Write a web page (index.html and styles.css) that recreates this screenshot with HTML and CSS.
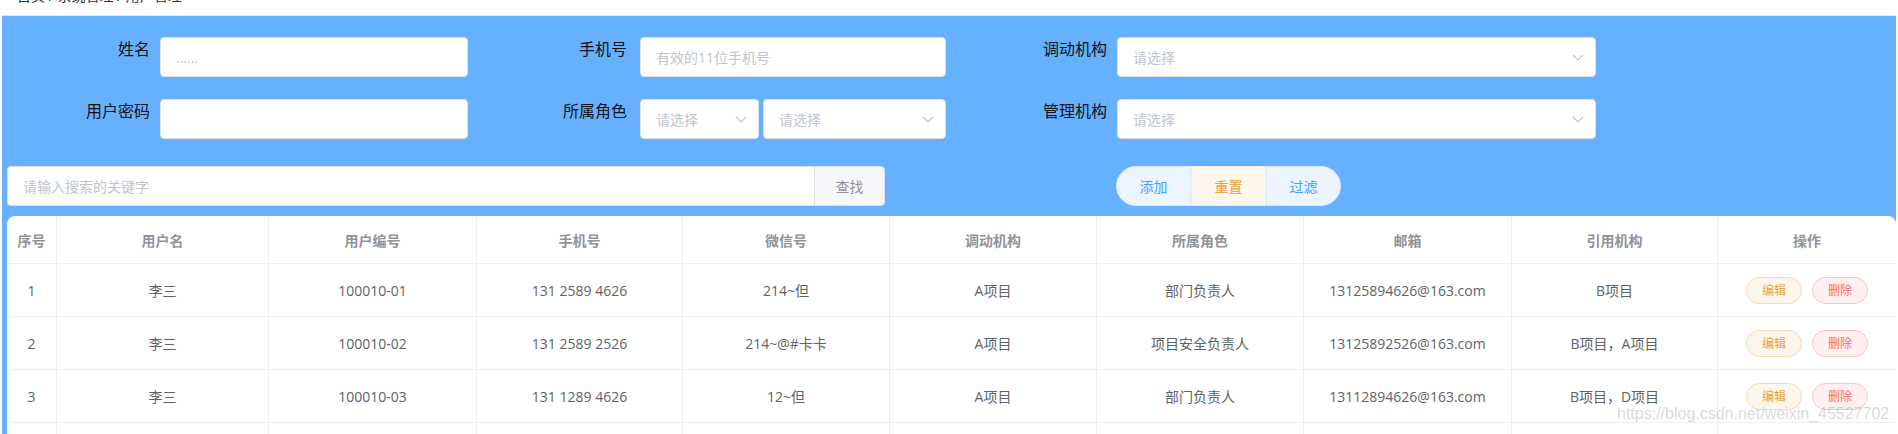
FILE: index.html
```html
<!DOCTYPE html>
<html lang="zh-CN">
<head>
  <meta charset="UTF-8" />
  <title>用户管理</title>
  <link rel="stylesheet" href="styles.css">
</head>
<body>
  <div class="crumb">
    <span>首页 / 系统管理 / 用户管理</span>
  </div>

  <div class="panel">
    <form class="filter">
      <div class="row">
        <div class="field">
          <label class="label l1">姓名</label>
          <input class="input w1" type="text" placeholder="......">
        </div>
        <div class="field">
          <label class="label l2">手机号</label>
          <input class="input w2" type="text" placeholder="有效的11位手机号">
        </div>
        <div class="field">
          <label class="label l3">调动机构</label>
          <div class="select w3">
            <span>请选择</span>
            <svg class="arrow" width="12" height="7" viewBox="0 0 12 7"><polyline points="1,1 6,6 11,1" /></svg>
          </div>
        </div>
      </div>

      <div class="row">
        <div class="field">
          <label class="label l1">用户密码</label>
          <input class="input w1" type="password">
        </div>
        <div class="field">
          <label class="label l2">所属角色</label>
          <div class="pair">
            <div class="select small">
              <span>请选择</span>
              <svg class="arrow" width="12" height="7" viewBox="0 0 12 7"><polyline points="1,1 6,6 11,1" /></svg>
            </div>
            <div class="select wide">
              <span>请选择</span>
              <svg class="arrow" width="12" height="7" viewBox="0 0 12 7"><polyline points="1,1 6,6 11,1" /></svg>
            </div>
          </div>
        </div>
        <div class="field">
          <label class="label l3">管理机构</label>
          <div class="select w3">
            <span>请选择</span>
            <svg class="arrow" width="12" height="7" viewBox="0 0 12 7"><polyline points="1,1 6,6 11,1" /></svg>
          </div>
        </div>
      </div>
    </form>

    <div class="tools">
      <div class="search">
        <input type="text" placeholder="请输入搜索的关键字">
        <button type="button">查找</button>
      </div>
      <div class="btn-group">
        <button type="button" class="blue">添加</button>
        <button type="button" class="orange">重置</button>
        <button type="button" class="blue">过滤</button>
      </div>
    </div>

    <div class="table-wrap">
      <table class="grid">
        <colgroup>
          <col style="width:50px"><col style="width:212px"><col style="width:208px">
          <col style="width:206px"><col style="width:207px"><col style="width:207px">
          <col style="width:207px"><col style="width:208px"><col style="width:206px">
          <col style="width:178px">
        </colgroup>
        <thead>
          <tr>
            <th>序号</th><th>用户名</th><th>用户编号</th><th>手机号</th><th>微信号</th>
            <th>调动机构</th><th>所属角色</th><th>邮箱</th><th>引用机构</th><th>操作</th>
          </tr>
        </thead>
        <tbody>
          <tr>
            <td>1</td><td>李三</td><td>100010-01</td><td>131 2589 4626</td><td>214~但</td>
            <td>A项目</td><td>部门负责人</td><td>13125894626@163.com</td><td>B项目</td>
            <td><button class="mini edit">编辑</button><button class="mini del">删除</button></td>
          </tr>
          <tr>
            <td>2</td><td>李三</td><td>100010-02</td><td>131 2589 2526</td><td>214~@#卡卡</td>
            <td>A项目</td><td>项目安全负责人</td><td>13125892526@163.com</td><td>B项目，A项目</td>
            <td><button class="mini edit">编辑</button><button class="mini del">删除</button></td>
          </tr>
          <tr>
            <td>3</td><td>李三</td><td>100010-03</td><td>131 1289 4626</td><td>12~但</td>
            <td>A项目</td><td>部门负责人</td><td>13112894626@163.com</td><td>B项目，D项目</td>
            <td><button class="mini edit">编辑</button><button class="mini del">删除</button></td>
          </tr>
          <tr class="next">
            <td></td><td></td><td></td><td></td><td></td>
            <td></td><td></td><td></td><td></td><td></td>
          </tr>
        </tbody>
      </table>
    </div>
  </div>

  <div class="watermark">https://blog.csdn.net/weixin_45527702</div>
</body>
</html>
```

FILE: styles.css
```css
body {
  margin: 0;
  padding: 0 2px;
  position: relative;
  background: #fff;
  font-family: 'Open Sans', 'Noto Sans CJK SC', sans-serif;
  font-size: 14px;
  color: #606266;
  overflow: hidden;
}

.crumb {
  height: 15px;
  border-bottom: 1px solid #e4e7ed;
  overflow: hidden;
}

.crumb span {
  display: block;
  margin-top: -14px;
  padding-left: 15px;
  line-height: 20px;
  color: #303133;
}

.panel {
  background: #66b1ff;
  padding-top: 21px;
}

/* filter form */
.row {
  display: flex;
  height: 40px;
  margin-bottom: 22px;
}

.row + .row {
  margin-bottom: 27px;
}

.field {
  display: flex;
}

.label {
  box-sizing: border-box;
  text-align: right;
  font-size: 16px;
  line-height: 24px;
  color: #111;
}

.l1 { width: 158px; padding-right: 10px; }
.l2 { width: 172px; padding-right: 13px; }
.l3 { width: 171px; padding-right: 10px; }

.input,
.select {
  box-sizing: border-box;
  height: 40px;
  border: 1px solid #dcdfe6;
  border-radius: 4px;
  background: #fff;
  padding: 0 15px;
  font-family: inherit;
  font-size: 14px;
  color: #606266;
  outline: none;
}

.input::placeholder {
  color: #c0c4cc;
}

.w1 { width: 308px; }
.w2 { width: 306px; }
.w3 { width: 479px; }

.select {
  display: flex;
  align-items: center;
  justify-content: space-between;
  padding-right: 11px;
  color: #c0c4cc;
}

.pair {
  display: flex;
  gap: 4px;
}

.select.small { width: 119px; }
.select.wide { width: 183px; }

.arrow polyline {
  fill: none;
  stroke: #c0c4cc;
  stroke-width: 1.2;
}

/* search + actions */
.tools {
  display: flex;
  padding-left: 5px;
  height: 40px;
}

.search {
  display: flex;
  width: 878px;
}

.search input {
  flex: 1;
  box-sizing: border-box;
  height: 40px;
  border: 1px solid #dcdfe6;
  border-right: none;
  border-radius: 4px 0 0 4px;
  padding: 0 15px;
  font-family: inherit;
  font-size: 14px;
  outline: none;
}

.search input::placeholder {
  color: #c0c4cc;
}

.search button {
  width: 71px;
  height: 40px;
  border: 1px solid #dcdfe6;
  border-radius: 0 4px 4px 0;
  background: #f5f7fa;
  color: #909399;
  font-family: inherit;
  font-size: 14px;
}

.btn-group {
  display: flex;
  margin-left: 231px;
}

.btn-group button {
  width: 75px;
  height: 40px;
  border: 1px solid #d9ecff;
  font-family: inherit;
  font-size: 14px;
  padding: 0;
}

.btn-group button:first-child {
  border-radius: 20px 0 0 20px;
}

.btn-group button:last-child {
  border-radius: 0 20px 20px 0;
}

.btn-group .blue {
  background: #ecf5ff;
  color: #409eff;
}

.btn-group .orange {
  background: #fdf6ec;
  border-color: #faecd8;
  color: #e6a23c;
}

/* table */
.table-wrap {
  margin: 10px 0 0 5px;
  background: #fff;
  border-radius: 8px 8px 0 0;
  overflow: hidden;
}

.grid {
  width: 1889px;
  table-layout: fixed;
  border-collapse: separate;
  border-spacing: 0;
}

.grid th,
.grid td {
  padding: 0;
  text-align: center;
  border-right: 1px solid #ebeef5;
  border-bottom: 1px solid #ebeef5;
  white-space: nowrap;
}

.grid th:last-child,
.grid td:last-child {
  border-right: none;
}

.grid th {
  height: 47px;
  color: #909399;
  font-weight: bold;
}

.grid td {
  height: 52px;
  color: #606266;
}

.mini {
  box-sizing: border-box;
  width: 56px;
  height: 27px;
  padding: 0;
  border-radius: 14px;
  font-family: inherit;
  font-size: 12px;
  vertical-align: middle;
}

.mini + .mini {
  margin-left: 10px;
}

.mini.edit {
  background: #fdf6ec;
  border: 1px solid #f5dab1;
  color: #e6a23c;
}

.mini.del {
  background: #fef0f0;
  border: 1px solid #fbc4c4;
  color: #f56c6c;
}

.watermark {
  position: absolute;
  top: 405px;
  left: 1617px;
  font-family: 'Liberation Sans', sans-serif;
  font-size: 16px;
  color: rgba(170, 170, 170, 0.45);
  white-space: nowrap;
}
```
